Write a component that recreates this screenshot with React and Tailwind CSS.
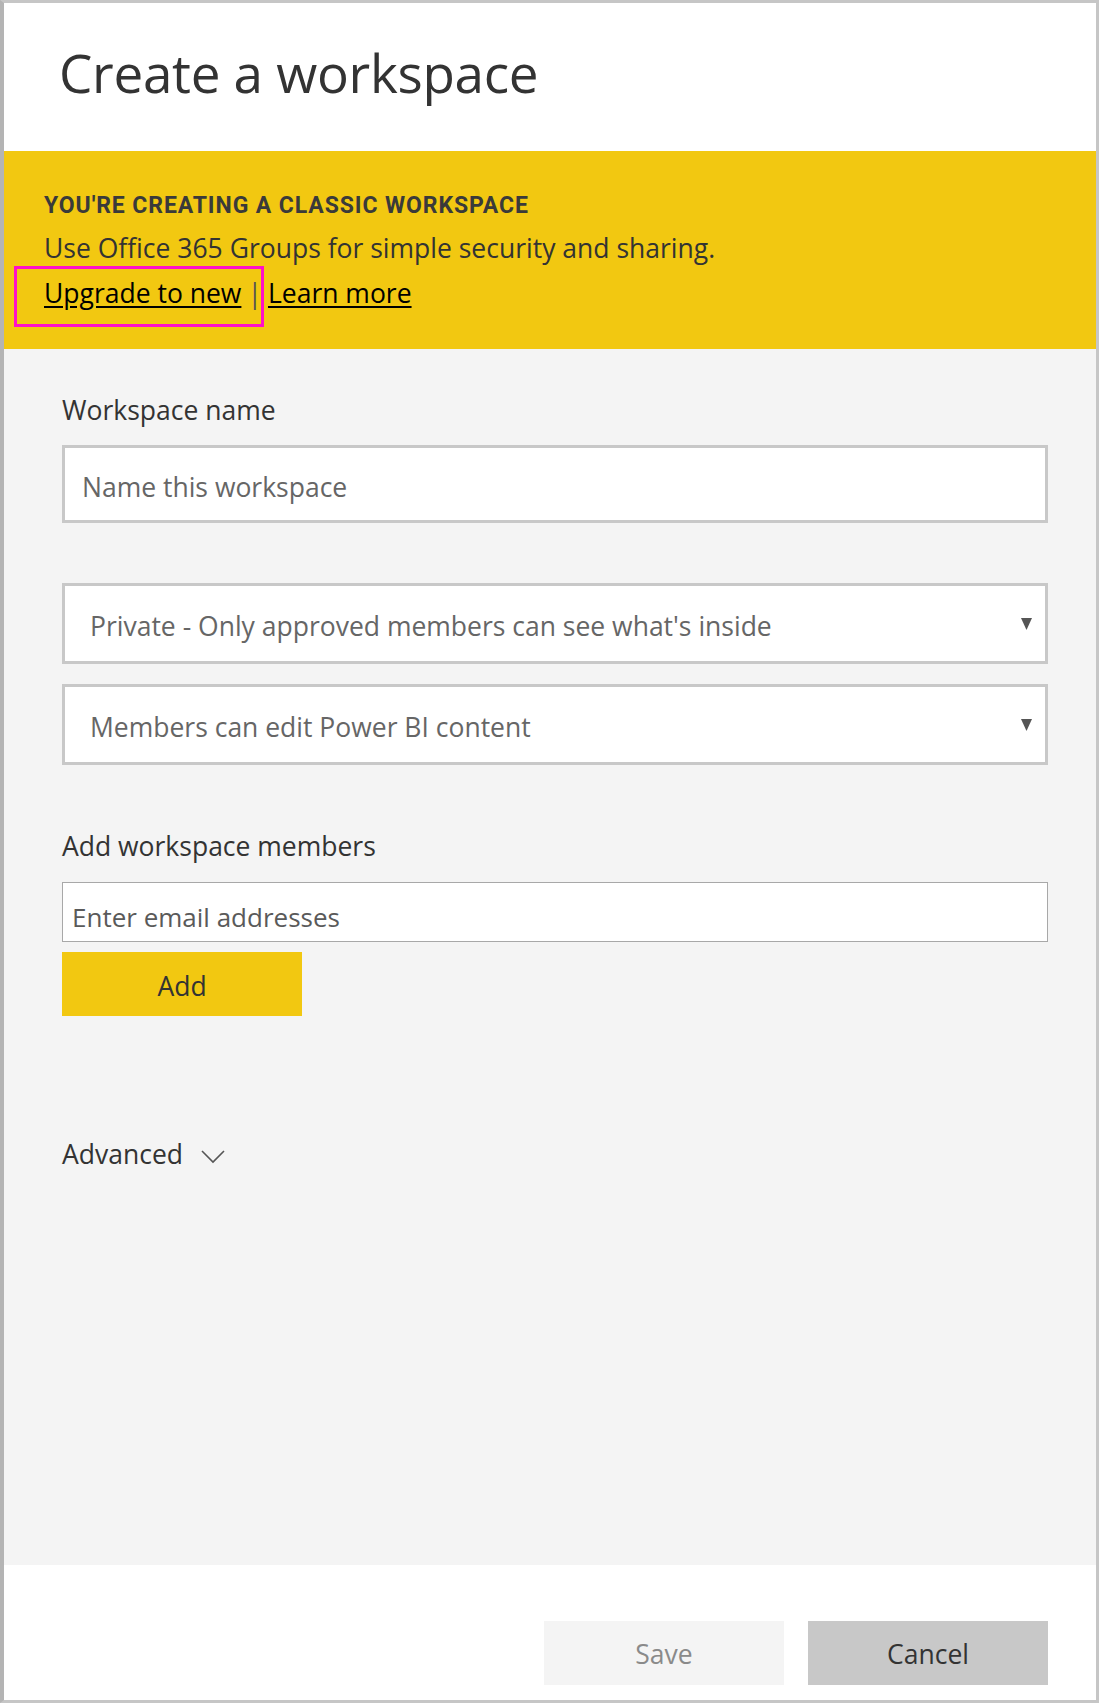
import React from 'react';

const font = { fontFamily: "'Open Sans', 'Noto Sans', sans-serif" };

function Caret() {
  return (
    <svg width="11" height="12" viewBox="0 0 11 12" className="shrink-0 mb-[6px]">
      <polygon points="0,0 11,0 5.5,12" fill="#555555" />
    </svg>
  );
}

function SelectBox({ label, className }) {
  return (
    <div className={`flex items-center justify-between bg-white border-[3px] border-[#c8c8c8] h-[81px] pl-[25px] pr-[13px] pt-[6px] ${className}`}>
      <span className="text-[26.5px] text-[#666666]">{label}</span>
      <Caret />
    </div>
  );
}

export default function App() {
  return (
    <div className="w-[1099px] h-[1703px] bg-white" style={font}>
      <div className="w-full h-full flex flex-col border-t-[3px] border-r-[3px] border-b-[3px] border-l-[4px] border-[#c6c6c6] border-l-[#b4b4b4]">
        <div className="h-[148px] shrink-0 pl-[55px] pt-[34px]">
          <h1 className="text-[53px] leading-[72px] text-[#333333] tracking-[-0.3px]">Create a workspace</h1>
        </div>

        <div className="h-[198px] shrink-0 bg-[#f2c811] pl-[40px] pt-[35px]">
          <div className="relative">
            <p className="text-[23px] leading-[39px] font-bold text-[#3a3a3a] uppercase tracking-[0.9px]" style={{ fontFamily: 'Roboto, sans-serif' }}>
              You're creating a classic workspace
            </p>
            <p className="text-[26.5px] leading-[46px] text-[#333333]">
              Use Office 365 Groups for simple security and sharing.
            </p>
            <p className="text-[26.5px] leading-[44px] text-[#333333]">
              <a href="#" className="underline underline-offset-[3px] text-black">Upgrade to new</a>
              <span className="text-[#555555] mx-[6px]">|</span>
              <a href="#" className="underline underline-offset-[3px] text-black">Learn more</a>
            </p>
            <div className="absolute left-[-30px] top-[80px] w-[250px] h-[61px] border-[3px] border-[#ff10c8]" />
          </div>
        </div>

        <div className="flex-1 bg-[#f4f4f4] pl-[58px] pr-[48px] pt-[45px]">
          <p className="text-[26.5px] leading-[32px] text-[#333333]">Workspace name</p>
          <div className="mt-[19px] h-[78px] bg-white border-[3px] border-[#c8c8c8] flex items-center pl-[17px] pt-[8px]">
            <span className="text-[26.5px] text-[#666666]">Name this workspace</span>
          </div>

          <SelectBox className="mt-[60px]" label="Private - Only approved members can see what's inside" />
          <SelectBox className="mt-[20px]" label="Members can edit Power BI content" />

          <p className="mt-[65px] text-[26.5px] leading-[32px] text-[#333333]">Add workspace members</p>
          <div className="mt-[20px] h-[60px] bg-white border border-[#a8a8a8] flex items-center pl-[9px] pt-[10px]">
            <span className="text-[26px] text-[#5a5a5a]">Enter email addresses</span>
          </div>
          <button className="mt-[10px] w-[240px] h-[64px] bg-[#f2c811] text-[26.5px] text-[#333333] flex items-center justify-center pt-[5px]">
            Add
          </button>

          <div className="mt-[122px] flex items-center gap-[18px]">
            <span className="text-[26.5px] leading-[32px] text-[#333333]">Advanced</span>
            <svg width="24" height="14" viewBox="0 0 24 14" className="mt-[6px]">
              <polyline points="1,1 12,12 23,1" fill="none" stroke="#555555" strokeWidth="1.6" />
            </svg>
          </div>
        </div>

        <div className="h-[135px] shrink-0 bg-white flex justify-end gap-[24px] pr-[48px] pt-[56px]">
          <button className="w-[240px] h-[64px] bg-[#f4f4f4] text-[26.5px] text-[#8a8a8a] pt-[4px]">Save</button>
          <button className="w-[240px] h-[64px] bg-[#c8c8c8] text-[26.5px] text-[#333333] pt-[4px]">Cancel</button>
        </div>
      </div>
    </div>
  );
}
